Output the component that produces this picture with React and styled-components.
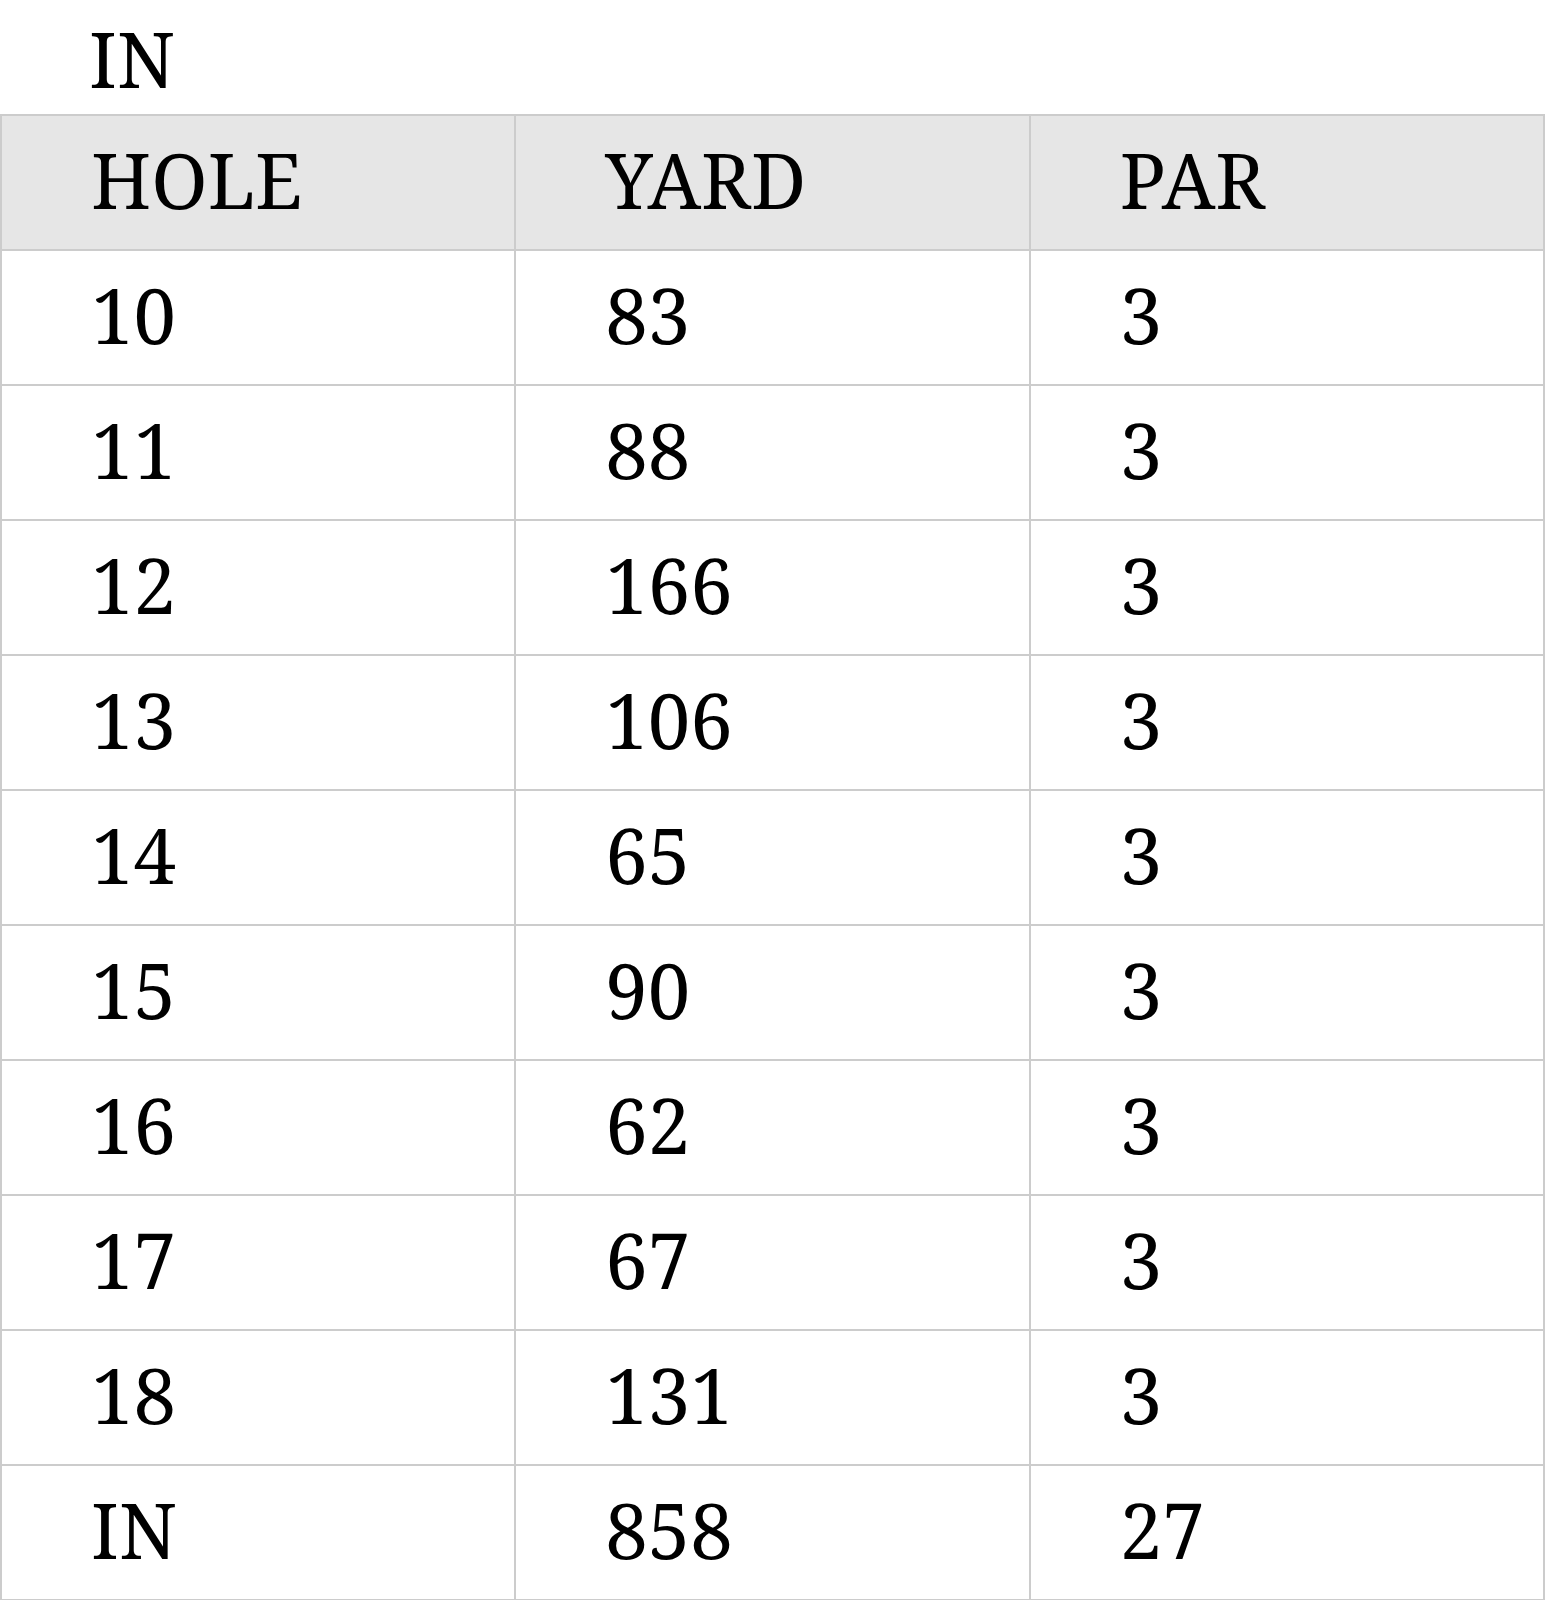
import React from "react";
import styled, { createGlobalStyle } from "styled-components";

const GlobalStyle = createGlobalStyle`
    html, body {
        margin: 0;
        padding: 0;
        background: #fff;
    }
    body {
        font-family: "Noto Serif", "DejaVu Serif", serif;
        color: #000;
    }
`;

const Title = styled.div`
    font-size: 76px;
    line-height: 117px;
    height: 114px;
    padding-left: 89px;
`;

const Table = styled.table`
    width: 1545px;
    border-collapse: collapse;
    table-layout: fixed;
    font-size: 76px;
`;

const Cell = styled.td`
    height: 135px;
    box-sizing: border-box;
    padding: 0 0 6px 89px;
    border: 2px solid #cccccc;
    text-align: left;
    vertical-align: middle;
    font-weight: normal;
    background: ${(p) => (p.$head ? "#e6e6e6" : "#fff")};
`;

const rows = [
    ["10", "83", "3"],
    ["11", "88", "3"],
    ["12", "166", "3"],
    ["13", "106", "3"],
    ["14", "65", "3"],
    ["15", "90", "3"],
    ["16", "62", "3"],
    ["17", "67", "3"],
    ["18", "131", "3"],
    ["IN", "858", "27"],
];

const App = () => {
    return (
        <>
            <GlobalStyle />
            <Title>IN</Title>
            <Table>
                <thead>
                    <tr>
                        <Cell as="th" $head>HOLE</Cell>
                        <Cell as="th" $head>YARD</Cell>
                        <Cell as="th" $head>PAR</Cell>
                    </tr>
                </thead>
                <tbody>
                    {rows.map((r) => (
                        <tr key={r[0]}>
                            {r.map((v, i) => (
                                <Cell key={i}>{v}</Cell>
                            ))}
                        </tr>
                    ))}
                </tbody>
            </Table>
        </>
    );
};

export default App;
